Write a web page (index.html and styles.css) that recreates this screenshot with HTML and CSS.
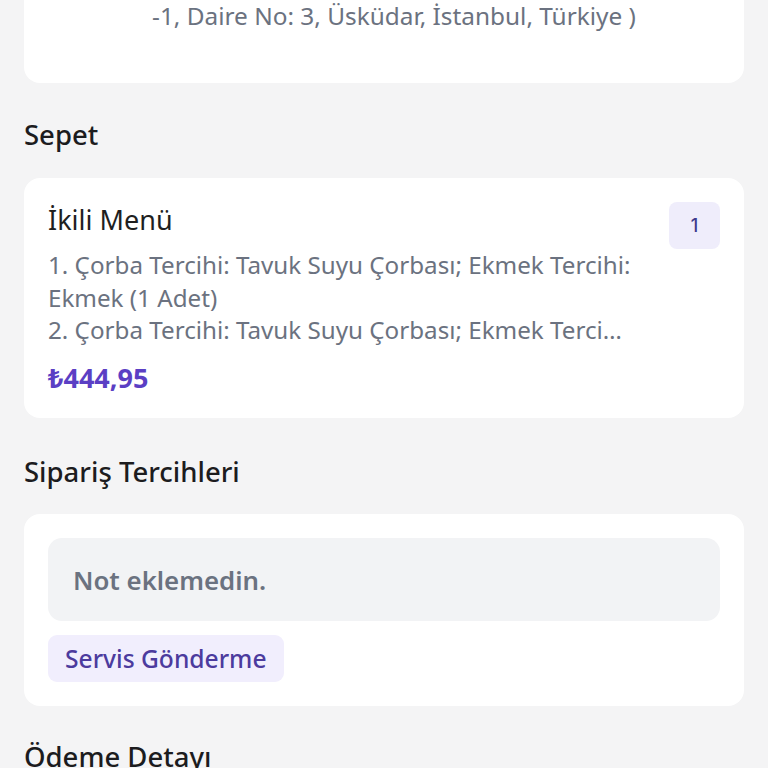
FILE: index.html
```html
<!DOCTYPE html>
<html lang="tr">
<head>
<meta charset="utf-8">
<link rel="stylesheet" href="styles.css">
</head>
<body>
<div class="page">
  <div class="card address-card">
    <p class="address">-1, Daire No: 3, Üsküdar, İstanbul, Türkiye )</p>
  </div>

  <h2 class="section-title title-sepet">Sepet</h2>
  <div class="card cart-card">
    <div class="cart-item">
      <div class="item-info">
        <div class="item-name">İkili Menü</div>
        <div class="item-desc">1. Çorba Tercihi: Tavuk Suyu Çorbası; Ekmek Tercihi: Ekmek (1 Adet)<br>2. Çorba Tercihi: Tavuk Suyu Çorbası; Ekmek Tercihi: Ekmek (1 Adet)</div>
        <div class="item-price">₺444,95</div>
      </div>
      <div class="qty">1</div>
    </div>
  </div>

  <h2 class="section-title title-pref">Sipariş Tercihleri</h2>
  <div class="card pref-card">
    <div class="note">Not eklemedin.</div>
    <div class="chips">
      <span class="chip">Servis Gönderme</span>
    </div>
  </div>

  <h2 class="section-title title-pay">Ödeme Detayı</h2>
</div>
</body>
</html>
```

FILE: styles.css
```css
* { box-sizing: border-box; }
html, body {
  margin: 0;
  padding: 0;
  background: #f4f4f5;
  font-family: "Noto Sans", "Open Sans", sans-serif;
}
.page {
  padding: 0 24px;
  display: flex;
  flex-direction: column;
}
.card {
  background: #ffffff;
  border-radius: 16px;
}
.address-card {
  border-radius: 0 0 16px 16px;
  padding: 0 24px 51px 44px;
}
.address {
  margin: 0;
  text-align: center;
  font-size: 24.4px;
  line-height: 32px;
  color: #6b7280;
}
.section-title {
  margin: 0;
  font-size: 27.5px;
  line-height: 36px;
  font-weight: 500;
  color: #1c1c1e;
}
.title-sepet { margin-top: 34px; margin-bottom: 25px; }
.title-pref { margin-top: 36px; margin-bottom: 24px; }
.title-pay { margin-top: 33px; }

.cart-card {
  padding: 24px;
  height: 240px;
}
.cart-item {
  display: flex;
  gap: 33px;
  align-items: flex-start;
}
.item-info {
  flex: 1;
  min-width: 0;
}
.item-name {
  font-size: 27px;
  line-height: 36px;
  color: #1f1f1f;
}
.item-desc {
  margin-top: 11px;
  font-size: 24.2px;
  line-height: 32.5px;
  color: #6b7280;
  display: -webkit-box;
  -webkit-box-orient: vertical;
  -webkit-line-clamp: 3;
  overflow: hidden;
}
.item-price {
  margin-top: 15px;
  font-size: 27px;
  line-height: 32px;
  font-weight: 700;
  color: #5b3fc4;
}
.qty {
  width: 51px;
  height: 47px;
  border-radius: 8px;
  background: #efedfb;
  color: #3f3a8c;
  font-family: "Inter", "Roboto", sans-serif;
  font-weight: 500;
  font-size: 18px;
  display: flex;
  align-items: center;
  justify-content: center;
}

.pref-card {
  padding: 24px;
  display: flex;
  flex-direction: column;
  gap: 14px;
}
.note {
  height: 83px;
  border-radius: 14px;
  background: #f2f3f5;
  padding: 0 25px;
  display: flex;
  align-items: center;
  font-size: 25.8px;
  font-weight: 600;
  color: #6b7280;
}
.chips {
  display: flex;
}
.chip {
  height: 47px;
  padding: 0 17px;
  border-radius: 9px;
  background: #f1eefd;
  color: #4c3b9e;
  font-size: 24.6px;
  font-weight: 500;
  display: inline-flex;
  align-items: center;
}
```
